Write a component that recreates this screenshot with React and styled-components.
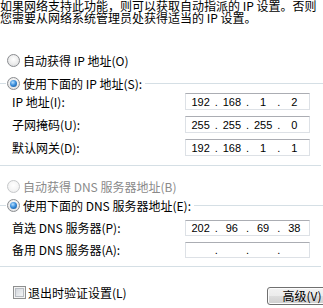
import styled, { createGlobalStyle } from "styled-components"

const GlobalStyle = createGlobalStyle`
  html, body {
    margin: 0;
    padding: 0;
    background: #ffffff;
  }
  body {
    font-family: "SimSun", "Noto Sans CJK SC", sans-serif;
    font-size: 12px;
    color: #000000;
  }
`

// Fenêtre entière, coupée sur les bords comme la capture
const Page = styled.div`
  width: 323px;
  height: 308px;
  overflow: hidden;
  display: flex;
  flex-direction: column;
`

const Intro = styled.div`
  line-height: 12px;
  height: 25px;
  white-space: nowrap;
`

const IntroLine = styled.div`
  height: 12px;
`

const RadioRow = styled.label`
  display: flex;
  align-items: center;
  gap: 3px;
  height: 16px;
  padding-left: ${(p) => p.$indent}px;
  margin-top: ${(p) => p.$top}px;
  white-space: nowrap;
  color: ${(p) => (p.$disabled ? "#8a8a8a" : "#000")};
`

const RadioDot = styled.span`
  flex: none;
  width: 13px;
  height: 13px;
  box-sizing: border-box;
  border-radius: 50%;
  border: 1px solid ${(p) => (p.$disabled ? "#c6c8ca" : "#8a8c8f")};
  background: ${(p) =>
    p.$disabled
      ? "radial-gradient(circle at 50% 40%, #ffffff 0%, #f4f4f4 60%, #e6e7e8 100%)"
      : "radial-gradient(circle at 50% 40%, #ffffff 0%, #eeeeee 50%, #d3d5d8 100%)"};
  display: flex;
  align-items: center;
  justify-content: center;

  &::after {
    content: "";
    display: ${(p) => (p.$checked ? "block" : "none")};
    width: 7px;
    height: 7px;
    border-radius: 50%;
    background: radial-gradient(circle at 40% 35%, #b8e0ff 0%, #3b8fdc 45%, #0b4a8e 100%);
  }
`

// Cadre de groupe : seule la ligne du haut et celle du bas sont visibles
const Group = styled.div`
  display: flex;
  flex-direction: column;
  border-bottom: 1px solid #d5dfe5;
  padding-bottom: ${(p) => p.$bottom}px;
  margin-right: 2px;
`

const GroupHeader = styled.label`
  display: flex;
  align-items: center;
  height: 16px;
  margin-top: ${(p) => p.$top}px;
  white-space: nowrap;
`

const Stub = styled.span`
  flex: none;
  width: 6px;
  height: 1px;
  background: #d5dfe5;
  margin-right: 1px;
`

const HeaderText = styled.span`
  margin-left: 3px;
`

const HeaderLine = styled.span`
  flex: 1;
  height: 1px;
  background: #d5dfe5;
  margin-left: 3px;
  margin-right: -2px;
`

const Rows = styled.div`
  display: flex;
  flex-direction: column;
  gap: ${(p) => p.$gap}px;
  padding-top: ${(p) => p.$top}px;
`

const FieldRow = styled.div`
  display: flex;
  align-items: center;
  padding-left: 12px;
  padding-right: 11px;
  white-space: nowrap;
`

const FieldLabel = styled.span`
  flex: 1;
`

const IpBox = styled.div`
  flex: none;
  width: 125px;
  height: ${(p) => p.$h}px;
  box-sizing: border-box;
  border: 1px solid #dde1e6;
  border-top-color: #abadb3;
  background: #ffffff;
  display: grid;
  grid-template-columns: 1fr 4px 1fr 4px 1fr 4px 1fr;
  align-items: center;
  padding: 0 1px;
  font-family: "Liberation Sans Narrow", "Liberation Sans", sans-serif;
  font-size: 11px;
`

const Octet = styled.span`
  text-align: center;
`

const Dot = styled.span`
  text-align: center;
`

const Footer = styled.div`
  display: flex;
  align-items: flex-start;
  justify-content: space-between;
  margin-top: 19px;
  padding-left: 13px;
`

const CheckRow = styled.label`
  display: flex;
  align-items: center;
  gap: 2px;
  height: 13px;
  white-space: nowrap;
`

const CheckBox = styled.span`
  flex: none;
  width: 13px;
  height: 13px;
  box-sizing: border-box;
  border: 1px solid #8e8f8f;
  background: linear-gradient(135deg, #cbcfd5 0%, #eef0f2 70%, #f7f7f7 100%);
  box-shadow: inset 0 0 0 1px #f4f4f4, inset 0 0 0 2px #b8bcc2;
`

const Button = styled.button`
  flex: none;
  width: 70px;
  height: 18px;
  margin-top: 1px;
  margin-right: -14px;
  padding: 0;
  border: 1px solid #707070;
  border-radius: 3px;
  background: linear-gradient(#f2f2f2 0%, #ebebeb 50%, #dddddd 51%, #cfcfcf 100%);
  box-shadow: inset 0 0 0 1px #fcfcfc;
  font-family: inherit;
  font-size: 12px;
  line-height: 14px;
  color: #000;
`

const IpField = ({ label, octets, h }) => (
  <FieldRow>
    <FieldLabel>{label}</FieldLabel>
    <IpBox $h={h}>
      <Octet>{octets[0]}</Octet>
      <Dot>.</Dot>
      <Octet>{octets[1]}</Octet>
      <Dot>.</Dot>
      <Octet>{octets[2]}</Octet>
      <Dot>.</Dot>
      <Octet>{octets[3]}</Octet>
    </IpBox>
  </FieldRow>
)

const App = () => {
  return (
    <Page>
      <GlobalStyle />
      <Intro>
        <IntroLine>如果网络支持此功能，则可以获取自动指派的 IP 设置。否则</IntroLine>
        <IntroLine>您需要从网络系统管理员处获得适当的 IP 设置。</IntroLine>
      </Intro>

      <RadioRow $indent={7} $top={27}>
        <RadioDot />
        自动获得 IP 地址(O)
      </RadioRow>

      <Group $bottom={9}>
        <GroupHeader $top={7}>
          <Stub />
          <RadioDot $checked />
          <HeaderText>使用下面的 IP 地址(S):</HeaderText>
          <HeaderLine />
        </GroupHeader>
        <Rows $gap={6} $top={2}>
          <IpField label="IP 地址(I):" octets={["192", "168", "1", "2"]} h={17} />
          <IpField label="子网掩码(U):" octets={["255", "255", "255", "0"]} h={17} />
          <IpField label="默认网关(D):" octets={["192", "168", "1", "1"]} h={17} />
        </Rows>
      </Group>

      <RadioRow $indent={7} $top={12} $disabled>
        <RadioDot $disabled />
        自动获得 DNS 服务器地址(B)
      </RadioRow>

      <Group $bottom={8}>
        <GroupHeader $top={3}>
          <Stub />
          <RadioDot $checked />
          <HeaderText>使用下面的 DNS 服务器地址(E):</HeaderText>
          <HeaderLine />
        </GroupHeader>
        <Rows $gap={5} $top={6}>
          <IpField label="首选 DNS 服务器(P):" octets={["202", "96", "69", "38"]} h={16} />
          <IpField label="备用 DNS 服务器(A):" octets={["", "", "", ""]} h={16} />
        </Rows>
      </Group>

      <Footer>
        <CheckRow>
          <CheckBox />
          退出时验证设置(L)
        </CheckRow>
        <Button type="button">高级(V)</Button>
      </Footer>
    </Page>
  )
}

export default App
